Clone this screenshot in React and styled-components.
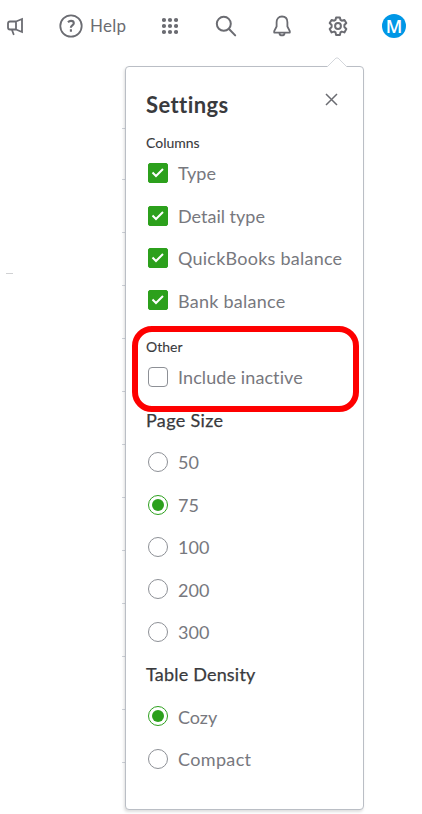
import React from "react";
import styled, { createGlobalStyle } from "styled-components";

const GlobalStyle = createGlobalStyle`
  * { box-sizing: border-box; }
  body { margin: 0; background: #fff; overflow: hidden; }
`;

const Page = styled.div`
  position: relative;
  width: 422px;
  height: 814px;
  overflow: hidden;
  background: #fff;
  font-family: Lato, "Open Sans", sans-serif;
  color: #6b6c72;
`;

const Toolbar = styled.header`
  display: flex;
  align-items: center;
  height: 52px;
  padding-left: 6px;
  svg { display: block; flex: none; }
`;

const HelpButton = styled.div`
  display: flex;
  align-items: center;
  gap: 7px;
  width: 67px;
  margin: 0 36px 0 34px;
  font-size: 17px;
  line-height: 20px;
  letter-spacing: 0.3px;
  white-space: nowrap;
`;

const Tool = styled.div`
  width: ${(p) => p.$w}px;
  margin-right: ${(p) => p.$gap}px;
`;

const Avatar = styled.div`
  display: flex;
  align-items: center;
  justify-content: center;
  width: 24px;
  height: 24px;
  border-radius: 50%;
  background: #0097e6;
  color: #fff;
  font: 600 18px/22px "Open Sans", sans-serif;
  padding-bottom: 1px;
`;

const Body = styled.main`
  display: flex;
  padding-top: 14px;
`;

const Underlay = styled.div`
  display: flex;
  flex-direction: column;
  align-items: flex-end;
  width: 125px;
  padding-top: 62px;
`;

const RowLine = styled.i`
  width: 3px;
  height: 1px;
  margin-bottom: ${(p) => p.$gap}px;
  background: #d0d4da;
`;

const Dash = styled.i`
  position: absolute;
  left: 6px;
  top: 273px;
  width: 7px;
  height: 1px;
  background: #d0d1d3;
`;

const Panel = styled.section`
  position: relative;
  width: 239px;
  height: 744px;
  padding: 22px 20px 0;
  border: 1px solid #babec5;
  border-radius: 4px;
  background: #fff;
  box-shadow: -1px 2px 3px rgba(0, 0, 0, 0.13);
`;

const Pointer = styled.svg`
  position: absolute;
  left: 200px;
  top: -10px;
`;

const PanelHeader = styled.div`
  display: flex;
  justify-content: space-between;
  height: 30px;
  padding-right: 5.5px;
  svg { margin-top: 3.5px; }
`;

const Title = styled.h1`
  margin: 0;
  color: #393a3d;
  font-size: 22px;
  font-weight: 700;
  line-height: 31px;
  letter-spacing: 0.4px;
`;

const GroupLabel = styled.h2`
  height: 20px;
  margin: ${(p) => p.$top}px 0 0;
  color: #393a3d;
  font-size: ${(p) => (p.$large ? 18 : 14)}px;
  font-weight: 400;
  line-height: ${(p) => (p.$large ? 18 : 20)}px;
  letter-spacing: ${(p) => p.$track || 0}px;
  -webkit-text-stroke: ${(p) => (p.$large ? 0.25 : 0.1)}px #393a3d;
  white-space: nowrap;
`;

const Options = styled.div`
  margin-top: ${(p) => p.$top}px;
`;

const Option = styled.label`
  display: flex;
  align-items: center;
  height: 42.4px;
  padding-left: 2px;
  gap: 10px;
`;

const Check = styled.span`
  display: grid;
  place-items: center;
  flex: none;
  width: 20px;
  height: 20px;
  border: 1px solid ${(p) => (p.$on ? "#2ca01c" : "#8d9096")};
  border-radius: ${(p) => (p.$on ? 2 : 4)}px;
  background: ${(p) => (p.$on ? "#2ca01c" : "#fff")};
`;

const Radio = styled.span`
  display: grid;
  place-items: center;
  flex: none;
  width: 20px;
  height: 20px;
  border: 1px solid ${(p) => (p.$on ? "#2ca01c" : "#8d9096")};
  border-radius: 50%;
  &::after {
    content: "";
    width: 12px;
    height: 12px;
    border-radius: 50%;
    background: ${(p) => (p.$on ? "#2ca01c" : "transparent")};
  }
`;

const OptionText = styled.span`
  padding-top: 0.6px;
  color: #77787e;
  font-size: 18px;
  line-height: 22px;
  letter-spacing: ${(p) => p.$track || 0}px;
  white-space: nowrap;
`;

const Highlight = styled.div`
  position: absolute;
  left: 132px;
  top: 326px;
  width: 227px;
  height: 86px;
  border: 6px solid #fe0000;
  border-radius: 20px;
`;

const line = { fill: "none", stroke: "#6b6c72", strokeWidth: 2, strokeLinecap: "round", strokeLinejoin: "round" };

const columns = [["Type", 0], ["Detail type", 0], ["QuickBooks balance", 0.24], ["Bank balance", 0.25]];
const sizes = ["50", "75", "100", "200", "300"];
const lineGaps = [50, 52, 52, 52, 52, 52, 52, 52, 52, 52, 52, 52, 0];

export default function App() {
  return (
    <Page>
      <GlobalStyle />
      <Toolbar>
        <svg width="19" height="20" viewBox="0 0 19 20" {...line} strokeWidth="1.8" strokeLinejoin="miter">
          <path d="M10 5.5H4Q2 5.5 2 7.5v4q0 2 2 2h6zM10 5.5l6-2.5v13l-6-2.5M6 14l1.6 4.2" />
        </svg>
        <HelpButton>
          <svg width="24" height="24" viewBox="0 0 24 24" {...line} strokeWidth="1.8">
            <circle cx="12" cy="12" r="10.7" />
            <path strokeWidth="2.1" strokeLinecap="butt" d="M9 8.2c1-1.1 2-1.3 3-1.3 1.7 0 2.8.9 2.8 2.3 0 2.1-2.9 2.2-2.9 4.2v.3M11.9 15.2v2.5" />
          </svg>
          Help
        </HelpButton>
        <Tool $w={16} $gap={37}>
          <svg width="16" height="18" viewBox="0 0 16 18" fill="#6b6c72">
            {[3, 9, 15].map((y) => [2, 8, 14].map((x) => <circle key={x + "-" + y} cx={x} cy={y} r="2.1" />))}
          </svg>
        </Tool>
        <Tool $w={22} $gap={35}>
          <svg width="22" height="22" viewBox="0 0 22 22" {...line}>
            <circle cx="8.8" cy="8.8" r="7" />
            <path d="M14 14l6.2 6.4" />
          </svg>
        </Tool>
        <Tool $w={20} $gap={36}>
          <svg width="20" height="24" viewBox="0 0 20 24" {...line} strokeWidth="1.8">
            <path d="M10 2.5C6.3 2.5 4.6 5.2 4.6 8.3v4.2L2.2 17.2v1.4h15.6v-1.4l-2.4-4.7V8.3C15.4 5.2 13.7 2.5 10 2.5z" />
            <path d="M7.5 19.5c.4 2.5 4.6 2.5 5 0" />
          </svg>
        </Tool>
        <Tool $w={20} $gap={34}>
          <svg width="20" height="22" viewBox="0 0 20 22" {...line}>
            <path d="M8.1 2.5h3.8l.6 2.4 1.3.8 2.6-.8L18.3 8l-1.9 2v2l1.9 2-1.9 3.4-2.6-.8-1.3.8-.6 2.6H8.1l-.6-2.6-1.3-.8-2.6.8L1.7 14l1.9-2v-2L1.7 8l1.9-3.1 2.6.8 1.3-.8z" />
            <circle cx="10" cy="11" r="2.9" />
          </svg>
        </Tool>
        <Avatar>M</Avatar>
      </Toolbar>
      <Body>
        <Underlay>
          {lineGaps.map((gap, i) => <RowLine key={i} $gap={gap} />)}
        </Underlay>
        <Panel>
          <Pointer width="22" height="11" viewBox="0 0 22 11">
            <path d="M1 11V10L11 1l10 9v1z" fill="#fff" />
            <path d="M1 10L10 1h2l9 9" fill="none" stroke="#d4d7dc" />
          </Pointer>
          <PanelHeader>
            <Title>Settings</Title>
            <svg width="13" height="13" viewBox="0 0 13 13" {...line} strokeWidth="1.5" strokeLinecap="butt">
              <path d="M1 1l11 11M12 1L1 12" />
            </svg>
          </PanelHeader>
          <GroupLabel $top={14}>Columns</GroupLabel>
          <Options $top={-1}>
            {columns.map(([name, track]) => (
              <Option key={name}>
                <Check $on>
                  <svg width="14" height="12" viewBox="0 0 14 12" fill="none" stroke="#fff" strokeWidth="2">
                    <path d="M1.5 5.5L5 9l7-7" />
                  </svg>
                </Check>
                <OptionText $track={track}>{name}</OptionText>
              </Option>
            ))}
          </Options>
          <GroupLabel $top={15.4}>Other</GroupLabel>
          <Options $top={-1}>
            <Option>
              <Check />
              <OptionText $track={0.1}>Include inactive</OptionText>
            </Option>
          </Options>
          <GroupLabel $large $top={12.6} $track={0.35}>Page Size</GroupLabel>
          <Options $top={10}>
            {sizes.map((size) => (
              <Option key={size}>
                <Radio $on={size === "75"} />
                <OptionText>{size}</OptionText>
              </Option>
            ))}
          </Options>
          <GroupLabel $large $top={12} $track={0.2}>Table Density</GroupLabel>
          <Options $top={10.3}>
            <Option><Radio $on /><OptionText>Cozy</OptionText></Option>
            <Option><Radio /><OptionText $track={0.35}>Compact</OptionText></Option>
          </Options>
        </Panel>
      </Body>
      <Dash />
      <Highlight />
    </Page>
  );
}
